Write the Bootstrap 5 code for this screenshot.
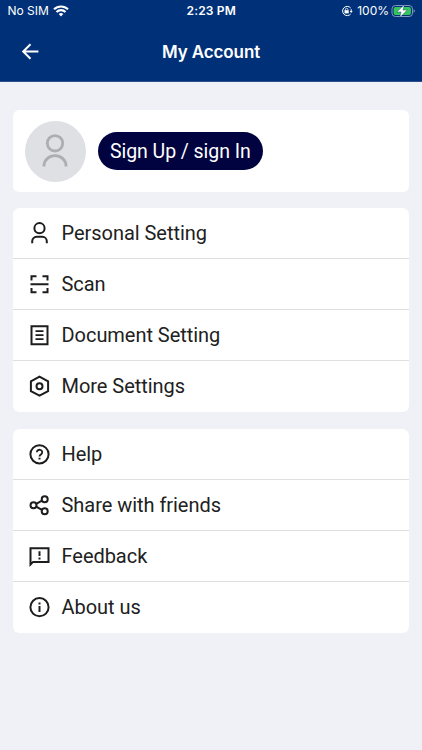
<!DOCTYPE html>
<html lang="en">
<head>
<meta charset="utf-8">
<meta name="viewport" content="width=device-width, initial-scale=1">
<title>My Account</title>
<link href="https://cdn.jsdelivr.net/npm/bootstrap@5.3.0/dist/css/bootstrap.min.css" rel="stylesheet">
<style>
body{background:#f0f1f6;font-family:Roboto,sans-serif;color:#212121;min-height:750px}
.app-header{background:#003178;height:82px;font-family:Inter,sans-serif;border-bottom:1px solid #2a4f8b}
.status-bar{height:22px;font-size:12px;line-height:22px;padding:0 7px 0 7.5px;display:grid;grid-template-columns:1fr auto 1fr}
.status-time{font-weight:600;letter-spacing:.15px}
.title-bar{height:59px;display:grid;grid-template-columns:1fr auto 1fr;padding:0 18px}
.title-text{font-size:17px;font-weight:600;line-height:24px;letter-spacing:-.1px}
.page-body{padding:28px 13px 0 12.5px}
.panel{border:0;border-radius:6px;overflow:hidden;margin-bottom:16.5px}
.profile{height:82px;padding-left:12px;gap:12px;margin-bottom:16px}
.avatar{width:61px;height:61px;background:#dfe0e4;color:#aeaeb0}
.btn-sign{background:#00033f;color:#fff;font-size:19.5px;line-height:39px;height:38px;padding:0 12.5px;border:0;letter-spacing:-.06px}
.menu-row{height:51px;padding:0 16px 0 14.5px;border:0;border-bottom:1px solid #dedfe1;font-size:20px;line-height:24px;color:#212121;gap:10.5px;background:#fff;letter-spacing:-.04px}
.menu-row:last-child{height:51px;padding-bottom:1px;border:0}
.menu-row svg{flex:none;fill:none;stroke:#1d1d1d;stroke-width:2}
</style>
<script src="https://cdn.jsdelivr.net/npm/bootstrap@5.3.0/dist/js/bootstrap.bundle.min.js"></script>
</head>
<body>
<header class="app-header text-white">
  <div class="status-bar">
    <div class="d-flex align-items-center gap-1"><span class="carrier">No SIM</span>
      <svg width="16" height="12" viewBox="0 0 16 12" fill="none" stroke="#fff" stroke-width="2.1"><path d="M1 4.3a10 10 0 0 1 14 0M3.5 7a6.4 6.4 0 0 1 9 0"/><path d="M8 11.4 5.7 9.1a3.3 3.3 0 0 1 4.6 0z" fill="#fff" stroke="none"/></svg>
    </div>
    <span class="status-time">2:23 PM</span>
    <div class="d-flex align-items-center justify-content-end">
      <svg class="me-1" width="12" height="12" viewBox="0 0 12 12" fill="none" stroke="#fff"><path d="M9.7 3A4.6 4.6 0 1 0 9.7 9M10.2 4.2V7"/><path d="m8.7 6 1.5 2 1.5-2z" fill="#fff" stroke="none"/><rect x="3.5" y="5.2" width="4.2" height="3.2" fill="#fff" stroke="none"/><path d="M4.3 5.5V4.6a1.3 1.3 0 0 1 2.6 0v.9" stroke-width=".8"/></svg>
      <span class="charge">100%</span>
      <svg class="battery" width="26" height="14" viewBox="0 0 26 14"><rect x="3" y="1.5" width="20.5" height="11" rx="3.4" fill="none" stroke="#8299bd"/><rect x="4.6" y="3" width="17.3" height="8" rx="2" fill="#35c759"/><path d="M24.6 5.2q1.3.6 1.3 1.8t-1.3 1.8z" fill="#8299bd"/><path d="M15.4.6 7.8 8h4.3l-1.4 5.6 7.6-7.5H14z" fill="#fff" stroke="#003178" stroke-width=".4"/></svg>
    </div>
  </div>
  <div class="title-bar align-items-center">
    <svg width="24" height="24" viewBox="0 0 24 24" fill="none" stroke="#fff" stroke-width="2"><path d="M20.4 11.5H5.4M12.5 4.2 5.2 11.5l7.3 7.3"/></svg>
    <h1 class="title-text m-0">My Account</h1>
  </div>
</header>
<main class="page-body">
  <section class="card panel profile flex-row align-items-center">
    <div class="avatar rounded-circle d-flex align-items-center justify-content-center">
      <svg width="30" height="36" viewBox="0 0 30 36" fill="none" stroke="currentColor" stroke-width="2.8"><circle cx="15" cy="10.3" r="7.7"/><path d="M4 33.5v-.8a11 10 0 0 1 22 0v.8"/></svg>
    </div>
    <button class="btn btn-sign rounded-pill">Sign Up / sign In</button>
  </section>
  <nav class="list-group panel">
    <a href="#" class="list-group-item menu-row d-flex align-items-center"><svg width="24" height="24" viewBox="-.5 -.2 24 24"><circle cx="12" cy="7" r="5.1"/><path d="M4.7 22v-2a4.4 4.4 0 0 1 4.4-4.4h5.8a4.4 4.4 0 0 1 4.4 4.4v2"/></svg><span>Personal Setting</span></a>
    <a href="#" class="list-group-item menu-row d-flex align-items-center"><svg width="24" height="24" viewBox="-.5 -.3 24 24"><path d="M3 12h18M4 8.3V4h5M15 4h5v4.3M4 15.7V20h5M15 20h5v-4.3"/></svg><span>Scan</span></a>
    <a href="#" class="list-group-item menu-row d-flex align-items-center"><svg width="24" height="24" viewBox="-.5 -.2 24 24"><path d="M4 3h16v18H4z"/><path d="M8 8h8M8 12h8M8 16h8" stroke-width="1.7"/></svg><span>Document Setting</span></a>
    <a href="#" class="list-group-item menu-row d-flex align-items-center"><svg width="24" height="24" viewBox="-.5 -.2 24 24"><path d="m12 2.5 8.6 4.6v9.8L12 21.5l-8.6-4.6V7.1z"/><circle cx="12" cy="12" r="3"/></svg><span>More Settings</span></a>
  </nav>
  <nav class="list-group panel">
    <a href="#" class="list-group-item menu-row d-flex align-items-center"><svg width="24" height="24" viewBox="-.5 -.3 24 24"><circle cx="12" cy="12" r="9.1"/><path d="M9.3 9.9a2.7 2.5 0 1 1 4.4 2c-.9.7-1.7 1.1-1.7 2.2" stroke-width="1.8"/><path d="M12 15.4v1.9"/></svg><span>Help</span></a>
    <a href="#" class="list-group-item menu-row d-flex align-items-center"><svg width="24" height="24" viewBox="-.5 -.3 24 24"><circle cx="6" cy="12" r="3"/><circle cx="17.2" cy="6" r="3"/><circle cx="17.2" cy="18" r="3"/><path d="m8.7 10.6 5.8-3.2M8.7 13.4l5.8 3.2"/></svg><span>Share with friends</span></a>
    <a href="#" class="list-group-item menu-row d-flex align-items-center"><svg width="24" height="24" viewBox="-.5 -.3 24 24"><path d="M3 20.2V4h18v13.6H5.6z"/><path d="M12 7v4.8M12 13.3v1.9"/></svg><span>Feedback</span></a>
    <a href="#" class="list-group-item menu-row d-flex align-items-center"><svg width="24" height="24" viewBox="-.5 -.2 24 24"><circle cx="12" cy="12" r="9.1"/><path d="M12 10.8v6M12 7.2v2"/></svg><span>About us</span></a>
  </nav>
</main>
</body>
</html>
